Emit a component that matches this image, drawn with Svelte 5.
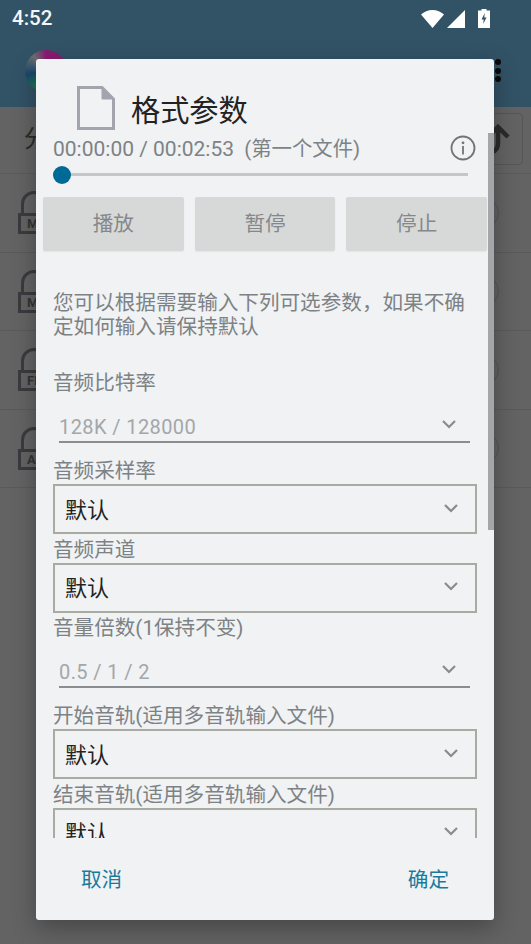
<script>
  const rows = ['M', 'M', 'FL', 'A'];
  const fields = [
    { label: '音频比特率', kind: 'input', value: '128K / 128000', cls: 'first' },
    { label: '音频采样率', kind: 'select', value: '默认' },
    { label: '音频声道', kind: 'select', value: '默认' },
    { label: '音量倍数(1保持不变)', kind: 'input', value: '0.5 / 1 / 2' },
    { label: '开始音轨(适用多音轨输入文件)', kind: 'select', value: '默认' },
    { label: '结束音轨(适用多音轨输入文件)', kind: 'select', value: '默认' }
  ];
</script>

<div class="screen">
  <header class="bar">
    <div class="status">
      <span class="time">4:52</span>
      <div class="sys">
        <svg width="23" height="18" viewBox="0 0 23 18"><path d="M0 4.500C3 1.800 7 0 11.500 0S20 1.800 23 4.500L11.500 18z" fill="#fff"/></svg>
        <svg width="18" height="18" viewBox="0 0 18 18"><path d="M18 0V18H0z" fill="#fff"/></svg>
        <svg class="batt" width="12" height="19" viewBox="0 0 12 19"><path d="M3.500 0h5v1.500H12V19H0V1.500h3.500z" fill="#fff"/><path d="M6.800 4 3.500 10.500H5.700L5.200 15 8.500 8.500H6.300z" fill="#325266"/></svg>
      </div>
    </div>
    <div class="tools">
      <div class="logo"></div>
      <div class="dots"><i></i><i></i><i></i></div>
    </div>
  </header>
  <div class="behind">
    <div class="pathrow">
      <span class="fen">分</span>
      <div class="upbtn">
        <svg width="26" height="32" viewBox="0 0 26 32"><path d="M3 14 13 4l10 10M13 4v16c0 5-2 8-6 9" fill="none" stroke="#2b2b2b" stroke-width="4.500"/></svg>
      </div>
    </div>
    {#each rows as r}
      <div class="row">
        <div class="lock">
          <div class="shackle"></div>
          <div class="body">{r}</div>
        </div>
        <div class="radio"></div>
      </div>
    {/each}
  </div>

  <div class="dialog">
    <div class="head">
      <svg width="38" height="44" viewBox="0 0 38 44"><path d="M1.500 1.500H25L36.500 13V42.500H1.500z" fill="#f0f2f4" stroke="#a3a5ae" stroke-width="3"/><path d="M25 1.500V13H36.500z" fill="#a3a5ae" stroke="#a3a5ae" stroke-width="1"/></svg>
      <h2>格式参数</h2>
    </div>
    <div class="scroll">
      <div class="timeline">
        <span class="clock"><span class="digits">00:00:00 / 00:02:53</span>&nbsp; (第一个文件)</span>
        <svg width="26" height="26" viewBox="0 0 26 26"><circle cx="13" cy="13" r="11.500" fill="none" stroke="#707478" stroke-width="1.800"/><circle cx="13" cy="7.800" r="1.400" fill="#707478"/><path d="M13 11v8.500" stroke="#707478" stroke-width="1.800"/></svg>
      </div>
      <div class="slider"><div class="thumb"></div></div>
      <div class="actions">
        <div class="btn">播放</div>
        <div class="btn">暂停</div>
        <div class="btn">停止</div>
      </div>
      <p class="intro">您可以根据需要输入下列可选参数，如果不确定如何输入请保持默认</p>
      {#each fields as f}
        <div class="label {f.cls ?? ''}">{f.label}</div>
        {#if f.kind === 'input'}
          <div class="input">
            <span>{f.value}</span>
            <svg class="chev" width="16" height="10" viewBox="0 0 16 10"><path d="M2 2 8 8l6-6" fill="none" stroke="#878c8f" stroke-width="2.200"/></svg>
          </div>
        {:else}
          <div class="select">
            <span>{f.value}</span>
            <svg class="chev" width="16" height="10" viewBox="0 0 16 10"><path d="M2 2 8 8l6-6" fill="none" stroke="#878c8f" stroke-width="2.200"/></svg>
          </div>
        {/if}
      {/each}
    </div>
    <div class="scrollbar"></div>
    <div class="foot">
      <span>取消</span>
      <span>确定</span>
    </div>
  </div>
</div>

<style>
  :global(body) {
    margin: 0;
    background: #636363;
  }
  .screen {
    position: relative;
    width: 531px;
    height: 944px;
    overflow: hidden;
    background: #5f5f5f;
    font-family: Roboto, "Noto Sans CJK SC", sans-serif;
  }
  .bar {
    height: 107px;
    background: #325266;
  }
  .status {
    height: 36px;
    display: flex;
    justify-content: space-between;
    align-items: center;
    padding: 0 41px 0 12px;
  }
  .time {
    color: #f4f6f7;
    font-size: 20.500px;
    font-weight: 500;
  }
  .sys {
    display: flex;
    align-items: center;
    gap: 3px;
    padding-top: 1px;
  }
  .batt {
    margin-left: 10px;
  }
  .tools {
    display: flex;
    justify-content: space-between;
    padding: 14px 30px 0 25px;
  }
  .logo {
    width: 42px;
    height: 42px;
    border-radius: 50%;
    background: conic-gradient(#8a1a70 0 40deg, #70304f 90deg, #1d7a50 170deg, #1d7a50 210deg, #19476e 260deg, #6a6f70 320deg, #8a1a70);
  }
  .dots {
    display: flex;
    flex-direction: column;
    gap: 2.500px;
    padding: 9px 0 0;
  }
  .dots i {
    width: 6px;
    height: 6px;
    border-radius: 50%;
    background: #0a0a0a;
  }
  .behind {
    background: #636363;
    color: #2a2a2a;
    height: 837px;
  }
  .pathrow {
    height: 67px;
    display: flex;
    justify-content: space-between;
    align-items: flex-start;
    padding: 6px 8px 0 24px;
    border-bottom: 1px solid #5b5b5b;
    box-sizing: border-box;
  }
  .fen {
    font-size: 24px;
    line-height: 52px;
  }
  .upbtn {
    width: 50px;
    height: 52px;
    border: 1px solid #565656;
    border-radius: 4px;
    display: flex;
    align-items: center;
    justify-content: center;
    box-sizing: border-box;
    overflow: hidden;
  }
  .row {
    height: 78.500px;
    box-sizing: border-box;
    border-bottom: 1px solid #5a5a5a;
    display: flex;
    justify-content: space-between;
    align-items: center;
    padding: 0 32px 0 18px;
  }
  .lock {
    width: 44px;
  }
  .shackle {
    width: 26px;
    height: 22px;
    margin-left: 3px;
    border: 3px solid #393b3e;
    border-bottom: 0;
    border-radius: 14px 14px 0 0;
    box-sizing: border-box;
  }
  .body {
    height: 21px;
    border: 3px solid #393b3e;
    box-sizing: border-box;
    font-size: 13px;
    font-weight: 700;
    color: #333;
    padding-left: 6px;
    line-height: 15px;
  }
  .radio {
    width: 30px;
    height: 30px;
    border: 1px solid #555;
    border-radius: 50%;
    box-sizing: border-box;
  }
  .dialog {
    position: absolute;
    left: 36px;
    top: 59px;
    width: 458px;
    height: 861px;
    background: #f0f2f4;
    border-radius: 3px;
    box-shadow: 0 8px 24px rgba(0, 0, 0, 0.3);
  }
  .head {
    height: 74px;
    display: flex;
    align-items: flex-end;
    gap: 16px;
    padding-left: 41px;
    box-sizing: border-box;
    padding-bottom: 3px;
  }
  h2 {
    margin: 0;
    font-size: 29.200px;
    font-weight: 400;
    color: #222;
    line-height: 42px;
    position: relative;
    top: 2px;
  }
  .scroll {
    height: 705px;
    overflow: hidden;
    padding: 0 17px;
    box-sizing: border-box;
    color: #7d8285;
  }
  .timeline {
    display: flex;
    justify-content: space-between;
    align-items: center;
    height: 30px;
    line-height: 30px;
    padding-right: 1px;
  }
  .clock {
    font-size: 20.400px;
    padding-top: 2px;
  }
  .digits {
    font-size: 21px;
  }
  .timeline svg {
    flex: none;
  }
  .slider {
    margin: 10px 9px 0 0;
    height: 3px;
    background: #c4c6c8;
    position: relative;
  }
  .thumb {
    position: absolute;
    left: 0;
    top: -7.500px;
    width: 18px;
    height: 18px;
    border-radius: 50%;
    background: #006a96;
  }
  .actions {
    display: flex;
    gap: 11px;
    margin: 21px -10px 0 -10px;
  }
  .btn {
    flex: 1;
    height: 54px;
    line-height: 55px;
    text-align: center;
    background: #d7d9d8;
    border-radius: 2px;
    font-size: 20.600px;
    color: #84888a;
    box-shadow: 0 1px 2px rgba(0, 0, 0, 0.06);
  }
  .intro {
    margin: 41px 0 0;
    font-size: 20.600px;
    line-height: 23.500px;
    color: #7d8285;
  }
  .label {
    font-size: 20.600px;
    line-height: 25px;
    color: #7d8285;
    white-space: nowrap;
    height: 24px;
  }
  .label.first {
    margin-top: 32px;
  }
  .input {
    height: 48px;
    margin: 0 7px 16px 6px;
    box-sizing: border-box;
    border-bottom: 2.500px solid #8b8e90;
    font-size: 20px;
    color: #a3a7a9;
    display: flex;
    justify-content: space-between;
    align-items: center;
    padding: 17px 13px 0 0;
    letter-spacing: 0.4px;
  }
  .input .chev {
    margin-top: -5px;
  }
  .select {
    height: 50px;
    margin: 1px 0 3.500px;
    box-sizing: border-box;
    border: 2px solid #a9aba3;
    font-size: 22px;
    color: #222;
    display: flex;
    justify-content: space-between;
    align-items: center;
    padding: 0 16px 3px 10px;
  }
  .scrollbar {
    position: absolute;
    right: 0;
    top: 74px;
    width: 6px;
    height: 397px;
    background: #a3a7aa;
  }
  .foot {
    display: flex;
    justify-content: space-between;
    padding: 24px 45px;
    font-size: 20.600px;
    line-height: 36px;
    color: #1a7a9c;
  }
</style>
